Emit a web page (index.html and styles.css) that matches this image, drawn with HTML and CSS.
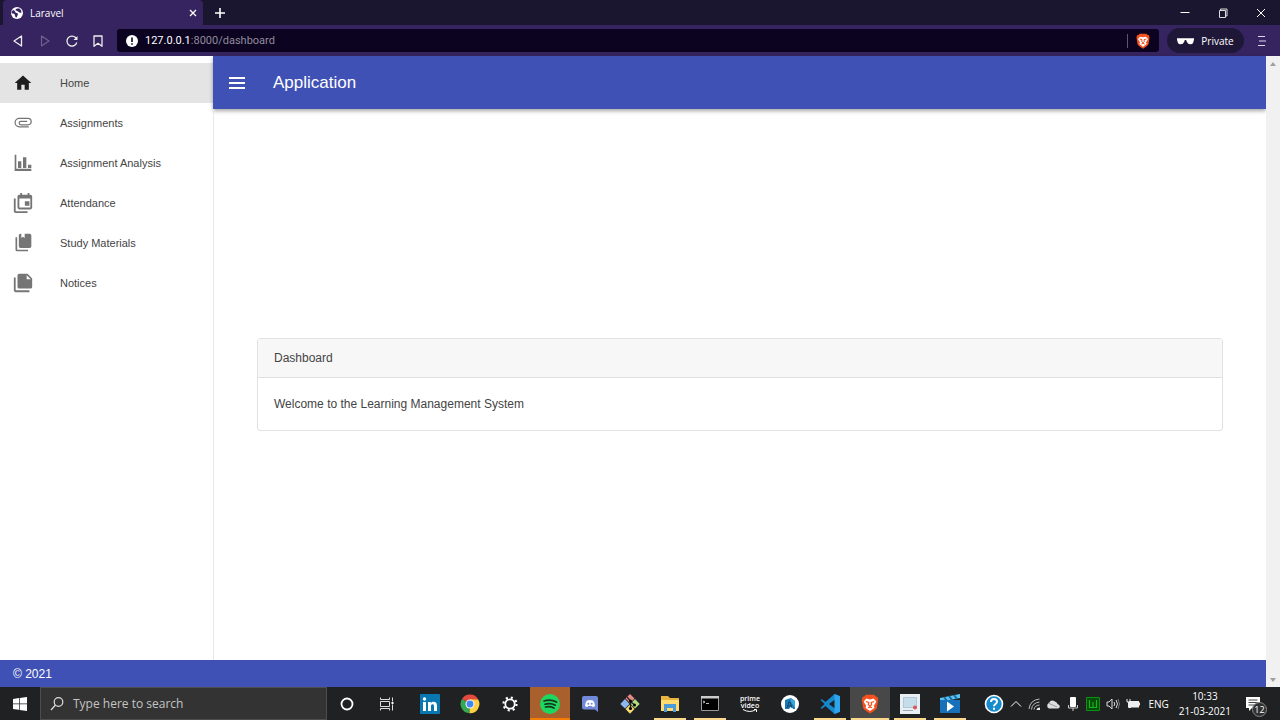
FILE: index.html
```
<!DOCTYPE html>
<html lang="en">
<head>
<meta charset="utf-8">
<title>Laravel</title>
<link rel="stylesheet" href="styles.css">
</head>
<body>
<div class="titlebar">
  <div class="tab">
    <svg class="i12" viewBox="0 0 24 24"><circle cx="12" cy="12" r="12" fill="#fff"/><path d="M4 6q3 0 4 3t4 3 1 5-2 4q-3 0-3-4t-4-4-3-3zM12 3h5q4 3 4 8-2 1-4 0t-3-2-4-2 2-4z" fill="#35245f"/></svg>
    <span class="tab-title">Laravel</span>
    <button class="plain" aria-label="Close tab"><svg class="i10" viewBox="0 0 10 10"><path d="M2 2l6 6M8 2l-6 6" stroke="#fff" stroke-width="1.3"/></svg></button>
  </div>
  <button class="plain new-tab" aria-label="New tab"><svg class="i12" viewBox="0 0 12 12"><path d="M6 1v10M1 6h10" stroke="#fff" stroke-width="1.6"/></svg></button>
  <div class="window-controls">
    <button class="plain" aria-label="Minimize"><svg class="i10" viewBox="0 0 10 10"><path d="M.5 4.5h9" stroke="#fff"/></svg></button>
    <button class="plain" aria-label="Restore"><svg class="i10" viewBox="0 0 10 10"><path d="M1.5 2.5h6v7h-6zM2.500 2.500v-1.500h6.500v7h-1.500" fill="none" stroke="#ddd"/></svg></button>
    <button class="plain" aria-label="Close"><svg class="i10" viewBox="0 0 10 10"><path d="M1 1l8 8M9 1l-8 8" stroke="#fff"/></svg></button>
  </div>
</div>
<div class="toolbar">
  <div class="nav-buttons">
    <button class="plain" aria-label="Back"><svg class="i14" viewBox="0 0 14 14"><path d="M10.500 2v10L3 7z" fill="none" stroke="#eee" stroke-width="1.300" stroke-linejoin="round"/></svg></button>
    <button class="plain" aria-label="Forward"><svg class="i14" viewBox="0 0 14 14"><path d="M3.500 2v10L11 7z" fill="none" stroke="#6e6190" stroke-width="1.200" stroke-linejoin="round"/></svg></button>
    <button class="plain" aria-label="Reload"><svg class="i14" viewBox="0 0 14 14"><path d="M11.800 8.500A5 5 0 1 1 10.500 3.500L11.500 4.500" fill="none" stroke="#eee" stroke-width="1.300"/><path d="M12.500 2v4H8.500z" fill="#eee"/></svg></button>
    <button class="plain" aria-label="Bookmark"><svg class="i14" viewBox="0 0 14 14"><path d="M2 2h8v10.300L6 9.300l-4 3z" fill="none" stroke="#eee" stroke-width="1.300" stroke-linejoin="round"/></svg></button>
  </div>
  <div class="address">
    <svg class="i12" viewBox="0 0 12 12"><circle cx="6" cy="6" r="6" fill="#fff"/><path d="M6 2.500v4.500M6 8.300v1.500" stroke="#0b0320" stroke-width="1.600"/></svg>
    <span class="url">127.0.0.1<span class="path">:8000/dashboard</span></span>
    <span class="address-rule"></span>
    <svg class="i16" viewBox="0 0 24 24"><use href="#brave"/></svg>
  </div>
  <div class="private"><svg class="glasses" viewBox="0 0 18 8"><path d="M0 1h18v1.500l-.8 3Q16.500 7.500 14 7.500T10.500 5L9.700 3H8.300L7.500 5Q6.500 7.500 4 7.500T.8 5.500L0 2.500z" fill="#fff"/></svg><span>Private</span></div>
  <button class="plain menu" aria-label="Menu"><svg class="i12" viewBox="0 0 12 12"><path d="M2 1.500h7M3 6h7M2 10.500h7" stroke="#ddd6ee" stroke-width="1.200"/></svg></button>
</div>
<div class="page">
  <div class="app">
    <aside class="sidebar">
      <nav>
        <a class="item active" href="#"><svg class="i20" viewBox="0 0 24 24"><path d="M10 20v-6h4v6h5v-8h3L12 3 2 12h3v8z"/></svg><span>Home</span></a>
        <a class="item" href="#"><svg class="i20" viewBox="0 0 24 24"><path d="M19 16.500H7.500a5 5 0 0 1 0-10H18a3.800 3.800 0 0 1 0 7.600H9.500a2.100 2.100 0 0 1 0-4.200H17" fill="none" stroke="#757575" stroke-width="1.500"/></svg><span>Assignments</span></a>
        <a class="item" href="#"><svg class="i20" viewBox="0 0 24 24"><path d="M2 2h2v17h18v2.500H2zM6 10h4v8H6zM12 5h4v13h-4zM18 14h4v4h-4z"/></svg><span>Assignment Analysis</span></a>
        <a class="item" href="#"><svg class="i22" viewBox="0 0 24 24"><path d="M19 10v5h-5v-5zM22 5v12a2 2 0 0 1-2 2H8a2 2 0 0 1-2-2V5c0-1.100.9-2 2-2h1V1h2v2h6V1h2v2h1a2 2 0 0 1 2 2zM20 17V7H8v10zM4 21h13v2H4a2 2 0 0 1-2-2V7h2z"/></svg><span>Attendance</span></a>
        <a class="item" href="#"><svg class="i20" viewBox="0 0 24 24"><path d="M20 18H9a2 2 0 0 1-2-2V3c0-1.100.9-2 2-2h1v5l2-1.500L14 6V1h6a2 2 0 0 1 2 2v13a2 2 0 0 1-2 2zM18 20v2H5a2 2 0 0 1-2-2V5h2v15z"/></svg><span>Study Materials</span></a>
        <a class="item" href="#"><svg class="i22" viewBox="0 0 24 24"><path d="M4 6H2v14c0 1.100.9 2 2 2h15v-2H4zM16 8h4.500L16 3.500zM8 2h9l5 5v9a2 2 0 0 1-2 2H8a2 2 0 0 1-2-2V4c0-1.100.9-2 2-2z"/></svg><span>Notices</span></a>
      </nav>
    </aside>
    <div class="main">
      <header class="appbar">
        <button class="plain" aria-label="Toggle menu"><svg class="i20" viewBox="0 0 20 20"><path d="M2 5h16M2 10h16M2 15h16" stroke="#fff" stroke-width="1.800"/></svg></button>
        <h1>Application</h1>
      </header>
      <main class="content">
        <section class="card">
          <h2>Dashboard</h2>
          <p>Welcome to the Learning Management System</p>
        </section>
      </main>
    </div>
    <footer class="footer">© 2021</footer>
  </div>
  <div class="scrollbar"><svg class="arrow" viewBox="0 0 8 8"><path d="M1 6l3-4 3 4z" fill="#a0a0a0"/></svg><svg class="arrow" viewBox="0 0 8 8"><path d="M1 2l3 4 3-4z" fill="#a0a0a0"/></svg></div>
</div>
<div class="taskbar">
  <button class="plain start" aria-label="Start"><svg class="i14" viewBox="0 0 14 14"><path d="M0 2l6-.9v5.500H0zM6.700 1L14 0v6.600H6.700zM0 7.300h6v5.500L0 12zM6.700 7.300H14V14l-7.300-1z" fill="#fff"/></svg></button>
  <label class="search"><svg class="i16" viewBox="0 0 16 16"><circle cx="9.500" cy="6" r="4.300" fill="none" stroke="#ddd" stroke-width="1.200"/><path d="M6.500 9L2 14" stroke="#ddd" stroke-width="1.200"/></svg><input type="text" placeholder="Type here to search" aria-label="Search"></label>
  <nav class="apps">
    <button class="plain" aria-label="Cortana"><svg class="i16" viewBox="0 0 16 16"><circle cx="8" cy="8" r="5.500" fill="none" stroke="#fff" stroke-width="1.800"/></svg></button>
    <button class="plain" aria-label="Task view"><svg class="i16" viewBox="0 0 16 16"><path d="M1.500 1.500v2h9v-2M1.500 5.500h9v5h-9zM1.500 14.500v-2h9v2M13.500 1.500v4M13.500 8.500v6" fill="none" stroke="#ddd"/><path d="M12.500 6h2v2h-2z" fill="#fff"/></svg></button>
    <button class="plain pinned-first" aria-label="LinkedIn"><svg class="i20" viewBox="0 0 20 20"><rect width="20" height="20" rx="1" fill="#0a78b0"/><path d="M3 8h3v9H3zM8 8h2.800v1.200C12.500 7 17 7.300 17 11.500V17h-3v-5c0-2.500-3-2.300-3 0v5H8z" fill="#fff"/><circle cx="4.500" cy="5" r="1.700" fill="#fff"/></svg></button>
    <button class="plain" aria-label="Chrome"><svg class="i20" viewBox="0 0 20 20"><path d="M10 10L2 5a9.300 9.300 0 0 1 16.200.5z" fill="#e24a3b"/><path d="M10 10l-.5 9.300A9.300 9.300 0 0 1 2 5z" fill="#35a853"/><path d="M10 10V5.500h8.200A9.300 9.300 0 0 1 9.500 19.300z" fill="#fbd044"/><circle cx="10" cy="10" r="4.500" fill="#f4f4f4"/><circle cx="10" cy="10" r="3.400" fill="#4285f4"/></svg></button>
    <button class="plain" aria-label="Settings"><svg class="i16" viewBox="0 0 16 16"><circle cx="8" cy="8" r="6.500" fill="none" stroke="#fff" stroke-width="2.200" stroke-dasharray="2.100 3.005"/><circle cx="8" cy="8" r="4.700" fill="none" stroke="#fff" stroke-width="1.800"/></svg></button>
    <button class="plain spotify" aria-label="Spotify"><svg class="i20" viewBox="0 0 20 20"><circle cx="10" cy="10" r="10" fill="#1ed760"/><path d="M4 7q6.500-2 12.500 1M5 10.200q5.500-1.500 10.300 1M5.500 13q4.500-1 8.500 1" fill="none" stroke="#17351e" stroke-width="1.700" stroke-linecap="round"/></svg></button>
    <button class="plain" aria-label="Discord"><svg class="i16" viewBox="0 0 16 16"><path d="M2 0h12q2 0 2 2v14l-3-2.500H2q-2 0-2-2V2q0-2 2-2z" fill="#7289da"/><path d="M5 4.500q3-1 6 0 1.500 1.500 2 5.500-1 1-2.500 1L10 10H6l-.5 1Q4 11 3 10q.5-4 2-5.500z" fill="#fff"/><circle cx="6.300" cy="7.700" r="1" fill="#7289da"/><circle cx="9.700" cy="7.700" r="1" fill="#7289da"/></svg></button>
    <button class="plain" aria-label="Git"><svg class="i20" viewBox="0 0 20 20"><path d="M10 0l4.500 4.500L10 9 5.500 4.500z" fill="#e88a84"/><path d="M5 5l4.500 5L5 14.500.3 10z" fill="#8db8ee"/><path d="M15 5l4.700 5-4.700 4.500-4.500-4.500z" fill="#b2dc83"/><path d="M10 10.500l4.500 4.500-4.500 4.700L5.500 15z" fill="#f4da73"/><path d="M7 3l3.500 4v8M10.500 7.500l4 3.500" fill="none" stroke="#222" stroke-width="1.300"/><circle cx="10.500" cy="7" r="1.500"/><circle cx="10.500" cy="14.500" r="1.600"/><circle cx="14.500" cy="11" r="1.500"/></svg></button>
    <button class="plain open" aria-label="File Explorer"><svg class="i20" viewBox="0 0 20 20"><path d="M1 2h7l2 2h9v13H1z" fill="#e9b33f"/><path d="M1 6h18v11H1z" fill="#ffdb70"/><path d="M4 10h12v8h-3v-4H7v4H4z" fill="#4a9bd8"/></svg></button>
    <button class="plain open" aria-label="Command Prompt"><svg class="i20" viewBox="0 0 20 20"><path d="M1.500 2.500h17v14h-17z" fill="#000" stroke="#999"/><path d="M1 2h18v2.500H1z" fill="#ccc"/><path d="M3 7l2 1-2 1M6 9.500h3" fill="none" stroke="#eee" stroke-width=".8"/></svg></button>
    <button class="plain" aria-label="Prime Video"><span class="prime">prime<br>video</span><svg class="smile" viewBox="0 0 16 4"><path d="M1 .5q7 4 13 0M12 .5h2.500V3" fill="none" stroke="#fff"/></svg></button>
    <button class="plain" aria-label="Android Studio"><svg class="i20" viewBox="0 0 20 20"><circle cx="10" cy="10" r="9" fill="#fff"/><path d="M5 6l6-2 4 3v8h-2l-1.500-3L9 15H5z" fill="#1779b5"/><path d="M10 4l5 3v7l-4-6z" fill="#38a8d9"/><path d="M7 14l2-6h1l2 6M8 12h3" fill="none" stroke="#164467"/></svg></button>
    <button class="plain open" aria-label="Visual Studio Code"><svg class="i20" viewBox="0 0 20 20"><path d="M14.500 0L20 2.300v15.400L14.500 20 5.500 12 2 14.800.5 14 4.700 10 .5 6 2 5.200 5.500 8zM15 5.500L9 10l6 4.500z" fill="#1688cd" fill-rule="evenodd"/><path d="M14.500 0L20 2.300v15.400L14.500 20z" fill="#2da5ed"/></svg></button>
    <button class="plain open current" aria-label="Brave"><svg class="i20" viewBox="0 0 24 24"><g id="brave"><path d="M7 1h10l2 2 2 .5.8 3.500-1.500 9.500Q19.500 19 12 23.500 4.500 19 3.700 16.500L2.200 7 3 3.500 5 3z" fill="#f4511e"/><path d="M7.500 5.500L12 6.500l4.500-1 3 3.500-1 2-2 3 1 2.500-2 1.500L12 20.500 8.500 18l-2-1.500 1-2.500-2-3-1-2z" fill="#fff"/><path d="M7 9l3.500 1-.5 3 2 1.500 2-1.500-.5-3L17 9M9.500 16.500l2.500-1 2.500 1" fill="none" stroke="#f4511e" stroke-width="1.500"/></g></svg></button>
    <button class="plain open" aria-label="Snip"><svg class="i20" viewBox="0 0 20 20"><path d="M0 0h20v20H0z" fill="#e7eff4"/><path d="M3.500 3.500h13v10h-13z" fill="#c5dceb" stroke="#86a6bd" stroke-dasharray="1 1"/><path d="M3 16.500h10" stroke="#9cabb5"/><circle cx="15" cy="13.500" r="2" fill="#d95357"/></svg></button>
    <button class="plain open" aria-label="Movies"><svg class="i20" viewBox="0 0 20 20"><path d="M0 4L20 0v4L0 8z" fill="#5cc4ec"/><path d="M4 3l3 4M9 2l3 4M14 1l3 4" stroke="#1768a8" stroke-width="2"/><path d="M0 6h20v13H0z" fill="#1670ba"/><path d="M7 7.500l7 5-7 5z" fill="#fff"/></svg></button>
  </nav>
  <div class="tray">
    <svg class="i20" viewBox="0 0 20 20"><circle cx="10" cy="10" r="8.500" fill="#168ccc" stroke="#fff" stroke-width="1.600"/><path d="M7 8q0-3 3-3t3 2.500Q13 9 11.500 10T10 12.200M10 13.700v2" fill="none" stroke="#fff" stroke-width="2"/></svg>
    <svg class="i12" viewBox="0 0 12 12"><path d="M1 8.500l5-5 5 5" fill="none" stroke="#fff"/></svg>
    <svg class="i12" viewBox="0 0 12 12"><path d="M1 11Q2 2 11.500 1M3.500 11.500q.5-6.500 8-7.500M6 11.500q.5-4 5.500-4.500" fill="none" stroke="#bbb"/><path d="M8.500 12q0-2.500 3.500-2.500V12z" fill="#eee"/></svg>
    <svg class="i14" viewBox="0 0 14 14"><path d="M3 11.500a3 3 0 0 1 0-5.500q2-4 6-1.500 2 .5 2.500 2.500 3 1 2 3.500-.5 1-2 1z" fill="#ddd"/><path d="M2 6l9 4" stroke="#999"/></svg>
    <svg class="i14" viewBox="0 0 14 14"><rect x="4" y="0" width="6" height="10" rx="1" fill="#fff"/><path d="M2.500 8v3h9V8M7 11v3" fill="none" stroke="#ccc"/></svg>
    <svg class="i14" viewBox="0 0 14 14"><path d="M.5.5h13v13H.5z" fill="#064c0b" stroke="#0a940f"/><path d="M3.500 3v7.500H7V5m0 5.500h3.500V3" fill="none" stroke="#18b51c" stroke-width="1.200"/></svg>
    <svg class="i14" viewBox="0 0 14 14"><path d="M1 5h2l3-3v10L3 9H1zM8 5q1.500 2 0 4M10 3q3 4 0 8" fill="none" stroke="#ddd"/><path d="M12 2q3 5 0 10" fill="none" stroke="#777"/></svg>
    <svg class="i14" viewBox="0 0 14 14"><path d="M3 4h10v6.500H3z" fill="#eee"/><path d="M13.500 5.500v3M1 2v3h3V2M2.500 5v5.500H5" fill="none" stroke="#eee"/></svg>
    <span class="lang">ENG</span>
    <div class="clock">10:33<br>21-03-2021</div>
    <div class="notices"><svg class="i14" viewBox="0 0 14 14"><path d="M0 0h14v11H6l-3 3v-3H0z" fill="#fff"/><path d="M2.500 3h9M2.500 5.500h9M2.500 8h6" stroke="#444"/></svg><span class="count">12</span></div>
  </div>
</div>
</body>
</html>
```
FILE: styles.css
```
* { box-sizing: border-box; }
body { margin: 0; height: 100vh; display: flex; flex-direction: column; font-family: "Liberation Sans", Arial, sans-serif; overflow: hidden; }
svg { display: block; flex: none; }
.plain { border: 0; padding: 0; background: none; color: inherit; display: flex; align-items: center; justify-content: center; }
.i10 { width: 10px; height: 10px; }
.i12 { width: 12px; height: 12px; }
.i14 { width: 14px; height: 14px; }
.i16 { width: 16px; height: 16px; }
.i20 { width: 20px; height: 20px; }
.i22 { width: 22px; height: 22px; }

.titlebar { flex: none; height: 25px; background: #1a162f; display: flex; align-items: stretch; padding-left: 3px; color: #fff; font-family: "Open Sans", sans-serif; }
.tab { width: 200px; background: #35245f; border-radius: 4px 4px 0 0; display: flex; align-items: center; padding: 0 5px 0 8px; gap: 7px; }
.tab-title { flex: 1; font-size: 10px; font-weight: 500; }
.new-tab { width: 34px; }
.window-controls { margin-left: auto; display: flex; gap: 28px; padding-right: 14px; }

.toolbar { flex: none; height: 31px; background: #35245f; display: flex; align-items: center; color: #fff; font-family: "Open Sans", sans-serif; padding-right: 12px; }
.nav-buttons { display: flex; gap: 13px; padding: 0 11px; width: 117px; }
.address { flex: 1; height: 23px; background: #0b0320; border-radius: 3px; display: flex; align-items: center; padding: 0 8px 0 9px; gap: 7px; }
.url { flex: 1; font-family: Roboto, sans-serif; font-size: 11px; }
.path { color: #918c9c; }
.address-rule { width: 1px; height: 14px; background: #5d566c; }
.private { margin-left: 8px; height: 25px; width: 77px; border-radius: 13px; background: #1f1738; display: flex; align-items: center; justify-content: center; gap: 7px; font-size: 10px; }
.glasses { width: 17px; height: 8px; }
.menu { margin-left: 12px; }

.page { flex: 1; min-height: 0; display: flex; background: #fff; }
.app { flex: 1; display: grid; grid-template-columns: 213px 1fr; grid-template-rows: 1fr 27px; }
.sidebar { padding-top: 7px; }
.item { height: 40px; display: grid; grid-template-columns: 20px 1fr; justify-items: center; align-items: center; gap: 27px; padding: 0 13px; font-size: 11px; color: #444; text-decoration: none; }
.item span { justify-self: start; }
.item svg { fill: #757575; }
.item.active { background: #e4e4e4; }
.item.active svg { fill: #1e1e1e; }
.main { display: flex; flex-direction: column; }
.appbar { flex: none; height: 53px; background: #3f51b5; color: #fff; display: flex; align-items: center; gap: 26px; padding: 0 14px; box-shadow: 0 2px 4px rgba(0, 0, 0, .35); }
.appbar h1 { margin: 0; font-size: 17px; font-weight: 400; }
.content { flex: 1; display: flex; align-items: center; padding: 0 43px; border-left: 1px solid #e8e8e8; }
.card { flex: 1; border: 1px solid #e2e2e2; border-radius: 3px; font-size: 12px; line-height: 18px; color: #444; }
.card h2 { margin: 0; padding: 10px 16px; font-size: 12px; font-weight: 400; background: #f7f7f7; border-bottom: 1px solid #dfdfdf; }
.card p { margin: 0; padding: 17px 16px; }
.footer { grid-column: 1 / -1; background: #3f51b5; color: #fff; font-size: 12px; display: flex; align-items: center; padding: 0 13px; }
.scrollbar { width: 14px; background: #f1f1f1; display: flex; flex-direction: column; justify-content: space-between; align-items: center; padding: 4px 0 3px; }
.arrow { width: 8px; height: 8px; }

.taskbar { flex: none; height: 33px; background: #202122; display: flex; color: #fff; font-family: "Open Sans", sans-serif; }
.start { width: 40px; }
.search { width: 287px; background: #333; border: 1px solid #4d4d4d; display: flex; align-items: center; gap: 8px; padding: 0 8px; }
.search input { flex: 1; min-width: 0; border: 0; padding: 0; background: none; outline: 0; color: #fff; font: 12px "Open Sans", sans-serif; }
.search input::placeholder { color: #c4c4c4; opacity: 1; }
.apps { display: flex; }
.apps .plain { width: 40px; flex-direction: column; border-bottom: 2px solid transparent; border-top: 2px solid transparent; }
.apps .pinned-first { margin-left: 3px; }
.apps .open { background: linear-gradient(#fbd88b, #fbd88b) center bottom / 32px 2px no-repeat border-box; }
.apps .current { background: linear-gradient(#fbd88b, #fbd88b) center bottom / 38px 2px no-repeat border-box, #484848 border-box; }
.apps .spotify { background: #a9602d; border-bottom-color: #f57c00; }
.prime { font: 600 7px/7px "Open Sans", sans-serif; }
.smile { width: 16px; height: 4px; }
.tray { flex: 1; display: flex; align-items: center; justify-content: flex-end; gap: 6px; padding-right: 13px; font-size: 10px; }
.lang { margin-left: 2px; }
.clock { margin-left: 4px; text-align: center; font-size: 10px; line-height: 15px; }
.notices { position: relative; width: 21px; margin-left: 9px; }
.count { position: absolute; left: 6px; top: 5px; width: 15px; height: 15px; border-radius: 50%; border: 1px solid #888; background: #303132; font-size: 9px; line-height: 13px; text-align: center; }
```
